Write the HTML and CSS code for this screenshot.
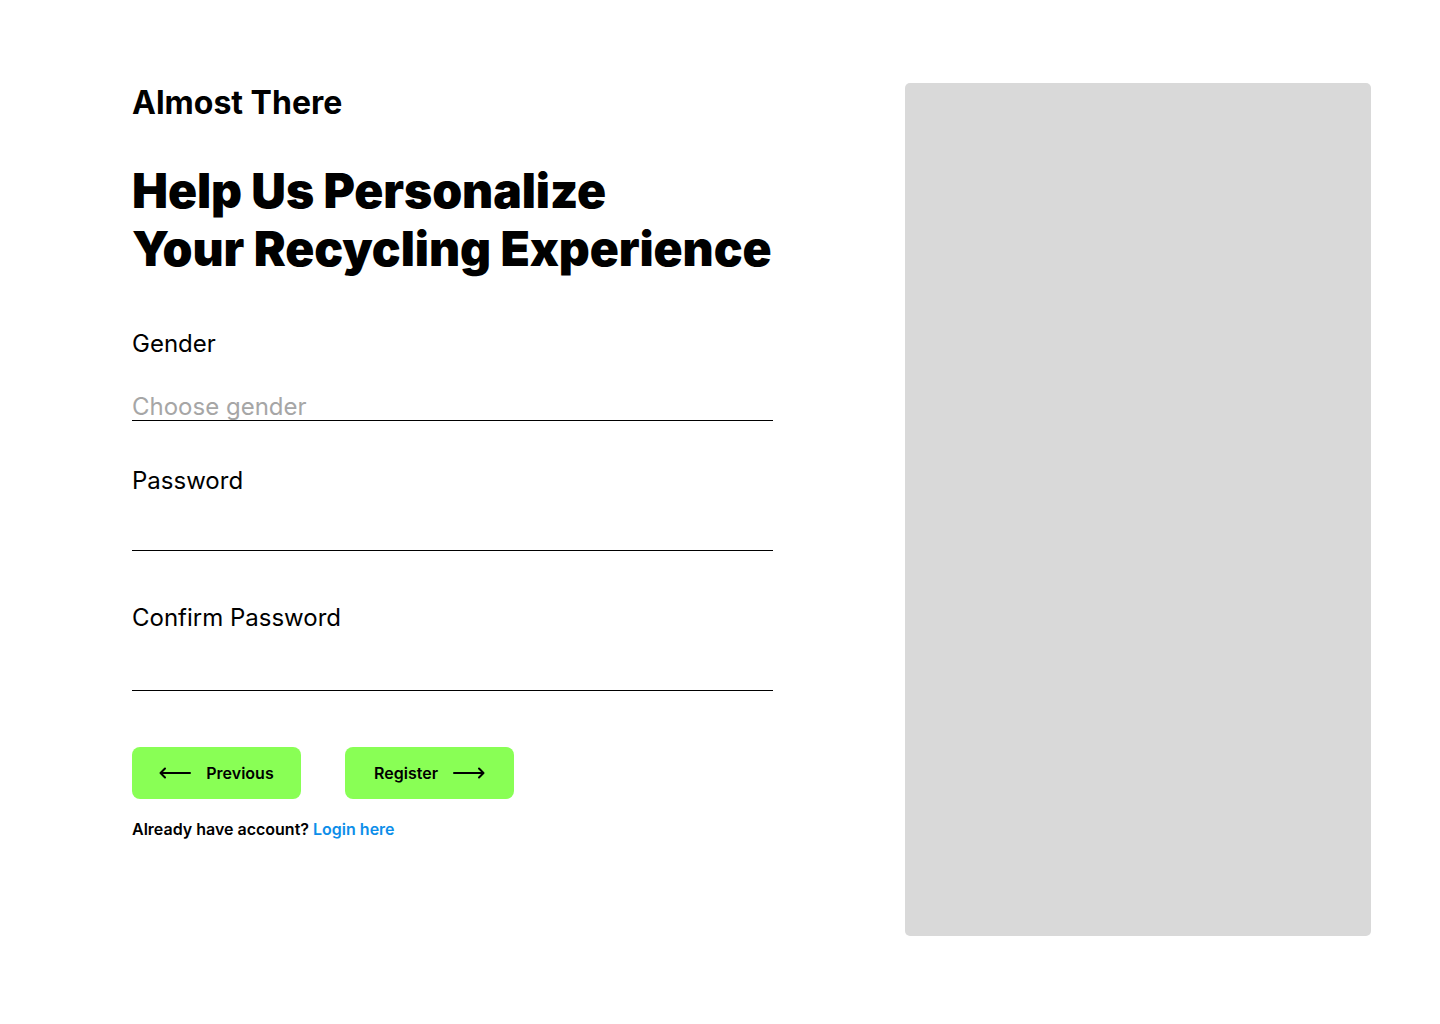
FILE: index.html
```html
<!DOCTYPE html>
<html lang="en">
<head>
<meta charset="utf-8">
<title>Almost There</title>
<link rel="stylesheet" href="styles.css">
</head>
<body>
<div class="page">
  <main class="form-col">
    <h2 class="eyebrow">Almost There</h2>
    <h1 class="title">Help Us Personalize<br>Your Recycling Experience</h1>
    <div class="field field-gender">
      <label class="label">Gender</label>
      <div class="input input-gender placeholder">Choose gender</div>
    </div>
    <div class="field field-password">
      <label class="label">Password</label>
      <div class="input input-password"></div>
    </div>
    <div class="field field-confirm">
      <label class="label">Confirm Password</label>
      <div class="input input-confirm"></div>
    </div>
    <div class="actions">
      <button class="btn">
        <svg width="32" height="12" viewBox="0 0 32 12" fill="none" stroke="#000" stroke-width="2" stroke-linecap="round" stroke-linejoin="round"><path d="M31 6H2M6 1.5L1.5 6L6 10.5"/></svg>
        <span>Previous</span>
      </button>
      <button class="btn">
        <span>Register</span>
        <svg width="32" height="12" viewBox="0 0 32 12" fill="none" stroke="#000" stroke-width="2" stroke-linecap="round" stroke-linejoin="round"><path d="M1 6H30M26 1.5L30.5 6L26 10.5"/></svg>
      </button>
    </div>
    <p class="footer">Already have account? <a href="#">Login here</a></p>
  </main>
  <aside class="panel"></aside>
</div>
</body>
</html>
```
FILE: styles.css
```css
* { box-sizing: border-box; }
body {
  margin: 0;
  background: #fff;
  font-family: Inter, "Noto Sans", sans-serif;
  color: #000;
}
.page {
  display: flex;
  padding: 83px 69px 0 132px;
  gap: 132px;
}
.form-col {
  width: 641px;
  flex-shrink: 0;
  display: flex;
  flex-direction: column;
}
.eyebrow {
  margin: 0;
  font-size: 32px;
  font-weight: 700;
  line-height: 40px;
}
.title {
  margin: 39px 0 0;
  font-size: 48px;
  font-weight: 900;
  line-height: 58px;
  white-space: nowrap;
  letter-spacing: -0.1px;
}
.field {
  display: flex;
  flex-direction: column;
}
.field-gender { margin-top: 51px; }
.field-password { margin-top: 45px; }
.field-confirm { margin-top: 52px; }
.label {
  font-size: 24px;
  line-height: 30px;
}
.input {
  border-bottom: 1px solid #000;
  font-size: 24px;
  line-height: 30px;
}
.input-gender { height: 62px; padding-top: 33px; }
.input-password { height: 55px; }
.input-confirm { height: 58px; }
.placeholder { color: #a6a6a6; }
.actions {
  margin-top: 56px;
  display: flex;
  gap: 44px;
}
.btn {
  width: 169px;
  height: 52px;
  border: none;
  border-radius: 8px;
  background: #89ff55;
  font-family: inherit;
  font-size: 16px;
  font-weight: 600;
  color: #000;
  display: flex;
  align-items: center;
  justify-content: center;
  gap: 15px;
  padding: 0;
}
.footer {
  margin: 20px 0 0;
  font-size: 16px;
  font-weight: 600;
  line-height: 20px;
}
.footer a {
  color: #0d8ee9;
  text-decoration: none;
}
.panel {
  width: 466px;
  height: 853px;
  flex-shrink: 0;
  background: #d9d9d9;
  border-radius: 5px;
}
```
